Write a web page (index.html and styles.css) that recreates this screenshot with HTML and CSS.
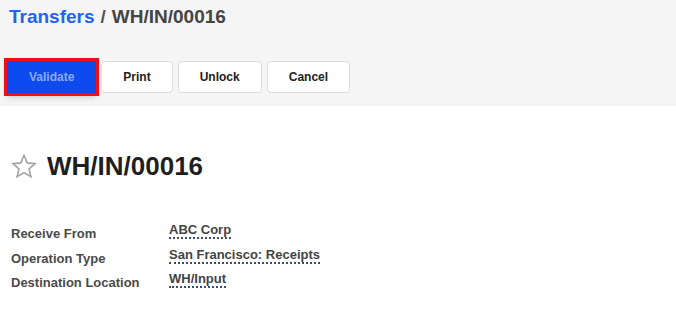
FILE: index.html
```html
<!DOCTYPE html>
<html>
<head>
<meta charset="utf-8">
<link rel="stylesheet" href="styles.css">
</head>
<body>
<div class="control-panel">
  <div class="breadcrumb"><a class="crumb-link">Transfers</a><span class="sep">/</span><span class="crumb-current">WH/IN/00016</span></div>
  <div class="actions">
    <button class="btn btn-primary">Validate</button>
    <button class="btn">Print</button>
    <button class="btn">Unlock</button>
    <button class="btn">Cancel</button>
  </div>
</div>
<div class="sheet">
  <div class="title-row">
    <svg class="star" width="26" height="24" viewBox="0 0 26 24"><polygon points="13,1.5 16.2,8.9 24.2,9.6 18.1,14.9 19.9,22.7 13,18.6 6.1,22.7 7.9,14.9 1.8,9.6 9.8,8.9" fill="none" stroke="#a3a3a3" stroke-width="1.6" stroke-linejoin="miter"/></svg>
    <h1 class="title">WH/IN/00016</h1>
  </div>
  <div class="fields">
    <div class="field"><span class="label">Receive From</span><span class="value">ABC Corp</span></div>
    <div class="field"><span class="label">Operation Type</span><span class="value">San Francisco: Receipts</span></div>
    <div class="field"><span class="label">Destination Location</span><span class="value">WH/Input</span></div>
  </div>
</div>
</body>
</html>
```
FILE: styles.css
```css
html, body {
  margin: 0;
  padding: 0;
  background: #ffffff;
  font-family: "Liberation Sans", Arial, sans-serif;
  color: #444444;
}
.control-panel {
  background: #f5f5f5;
  padding: 5px 0 14px 9px;
  height: 87px;
  box-sizing: content-box;
}
.breadcrumb {
  font-size: 19px;
  font-weight: bold;
  line-height: 24px;
  display: flex;
  white-space: nowrap;
}
.crumb-link {
  color: #2463eb;
}
.sep {
  color: #555555;
  margin: 0 6px;
}
.crumb-current {
  color: #444444;
}
.actions {
  display: flex;
  gap: 5px;
  margin-top: 32px;
  margin-left: -2px;
  align-items: flex-start;
}
.btn {
  font-family: "Liberation Sans", Arial, sans-serif;
  font-size: 12px;
  font-weight: bold;
  color: #222222;
  background: #ffffff;
  border: 1px solid #dedede;
  border-radius: 4px;
  height: 32px;
  padding: 0 21px;
  line-height: 30px;
}
.btn-primary {
  background: #0d4bef;
  border-color: #0d4bef;
  color: #8ea9f3;
  border-radius: 0;
  outline: 3px solid #f40d12;
  padding: 0 21px;
  box-shadow: 0 4px 6px rgba(0,0,0,0.18);
}
.sheet {
  padding: 44px 0 0 11px;
}
.title-row {
  display: flex;
  align-items: center;
  height: 32px;
}
.star {
  display: block;
  margin-right: 10px;
}
.title {
  margin: 0;
  font-size: 26px;
  line-height: 32px;
  font-weight: bold;
  color: #1f1f1f;
}
.fields {
  margin-top: 40px;
  display: flex;
  flex-direction: column;
}
.field {
  display: grid;
  grid-template-columns: 158px auto;
  align-items: start;
  height: 24.5px;
  font-size: 13px;
  font-weight: bold;
}
.label {
  color: #4a4a4a;
  padding-top: 4px;
  line-height: 16px;
}
.value {
  justify-self: start;
  color: #444444;
  line-height: 13px;
  padding-top: 1px;
  padding-bottom: 1px;
  border-bottom: 2px dotted #3b4d74;
}
```
